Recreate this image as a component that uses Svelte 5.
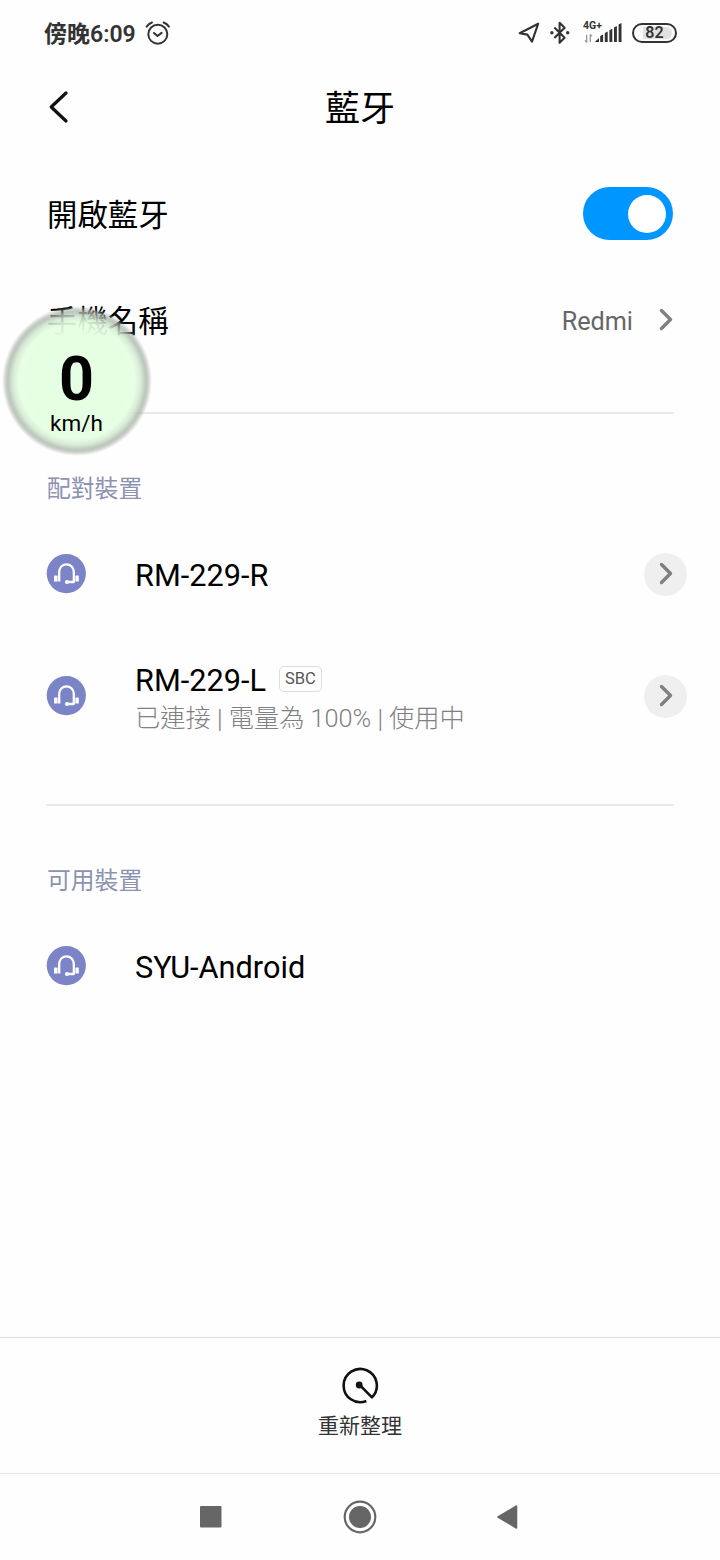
<script>
  let enabled = $state(true);
  let phoneName = $state('Redmi');
  let speed = $state(0);

  const paired = [
    { name: 'RM-229-R' },
    { name: 'RM-229-L', codec: 'SBC', status: '已連接 | 電量為 100% | 使用中' }
  ];
  const available = [{ name: 'SYU-Android' }];

  // signal bars: x offset and height
  const bars = [
    [4.7, 7.5],
    [9.3, 10.5],
    [13.9, 13.3],
    [18.5, 16],
    [23.1, 19]
  ];
</script>

{#snippet chevron()}
  <svg class="chevron" width="16" height="24" viewBox="0 0 16 24" aria-hidden="true">
    <path d="M3.5 2.5 L12.5 11.5 L3.5 20.5" />
  </svg>
{/snippet}

{#snippet headset()}
  <svg class="headset" width="40" height="40" viewBox="0 0 40 40" aria-hidden="true">
    <circle cx="20.3" cy="19.6" r="19.6" fill="#7b84c7" />
    <path d="M13.2 27.4 V17.6 a7.3 7.3 0 0 1 14.6 0 V28 H21" fill="none" stroke="#fff" stroke-width="2.3" stroke-linejoin="round" />
    <rect x="8" y="21.5" width="3.6" height="6" rx="0.6" fill="#fff" />
    <rect x="29.4" y="21.5" width="3.4" height="6" rx="0.6" fill="#fff" />
    <circle cx="20.9" cy="28" r="2" fill="#fff" />
  </svg>
{/snippet}

{#snippet device(d, more)}
  <li class="device">
    {@render headset()}
    <div class="info">
      <div class="title">
        <span class="name">{d.name}</span>
        {#if d.codec}<span class="codec">{d.codec}</span>{/if}
      </div>
      {#if d.status}<div class="status">{d.status}</div>{/if}
    </div>
    {#if more}
      <button class="more" aria-label="詳細資訊">{@render chevron()}</button>
    {/if}
  </li>
{/snippet}

<div class="screen">
  <div class="statusbar">
    <span class="time">傍晚6:09</span>
    <svg class="alarm" width="26" height="26" viewBox="0 0 26 26">
      <circle cx="12.8" cy="14.2" r="9.5" />
      <path d="M9 12.9 L12.5 16 L16.6 12.9" />
      <path d="M1.7 6.6 Q3.6 3.9 7 2.5 M18.6 2.5 Q22 3.9 23.9 6.6" />
    </svg>
    <div class="right">
      <svg class="line" width="22" height="22" viewBox="0 0 22 22">
        <path d="M20.2 1.7 L1.7 11.3 L9.4 12.6 L14 19.6 Z" />
      </svg>
      <svg class="line bt" width="20" height="24" viewBox="0 0 20 24">
        <path d="M4.4 6.6 L14.6 16.8 L9.6 21.8 V1.8 L14.6 6.8 L4.4 17" />
        <circle cx="1.9" cy="11.8" r="1.7" />
        <circle cx="17.7" cy="11.8" r="1.7" />
      </svg>
      <div class="net">
        <span>4G+</span>
        <svg width="38" height="22" viewBox="0 0 38 22">
          <path d="M2.7 20.5 V12.8 M1 18.4 L2.7 20.5 M6.3 12.3 V20 M6.3 12.3 L8 14.4" stroke="#999" stroke-width="1.3" fill="none" />
          <g transform="translate(11 0)" fill="#333">
            <path d="M-0.2 20 L4 16 V20 Z" />
            {#each bars as [x, h]}
              <path d={`M${x + 3.4} ${20 - h} V20 h-2.9 V${21.5 - h} Z`} />
            {/each}
          </g>
        </svg>
      </div>
      <div class="battery"><span>82</span></div>
    </div>
  </div>

  <header>
    <button class="back" aria-label="返回">
      <svg width="24" height="36" viewBox="0 0 24 36"><path d="M20 4 L5.2 18 L20 32" /></svg>
    </button>
    <h1>藍牙</h1>
  </header>

  <main>
    <div class="row toggle-row">
      <span class="label">開啟藍牙</span>
      <button class="switch" class:on={enabled} role="switch" aria-checked={enabled} aria-label="開啟藍牙" onclick={() => (enabled = !enabled)}>
        <i></i>
      </button>
    </div>
    <div class="row name-row">
      <span class="label">手機名稱</span>
      <span class="value">{phoneName}</span>
      {@render chevron()}
    </div>

    <section>
      <h2>配對裝置</h2>
      <ul>
        {#each paired as d}{@render device(d, true)}{/each}
      </ul>
    </section>

    <section>
      <h2>可用裝置</h2>
      <ul>
        {#each available as d}{@render device(d, false)}{/each}
      </ul>
    </section>
  </main>

  <button class="refresh">
    <svg width="42" height="40" viewBox="0 0 42 40" aria-hidden="true">
      <path d="M27.4 35 A16.6 16.6 0 1 1 32.9 31.4 L20.4 18.6" />
      <circle cx="20.2" cy="19" r="3.4" />
    </svg>
    <span>重新整理</span>
  </button>

  <nav>
    <svg width="22" height="22" viewBox="0 0 22 22"><rect width="21.5" height="21.5" rx="1" /></svg>
    <svg width="34" height="34" viewBox="0 0 34 34">
      <circle cx="17" cy="17" r="15.3" class="ring" />
      <circle cx="17" cy="17" r="11" />
    </svg>
    <svg width="22" height="26" viewBox="0 0 22 26"><path d="M1 13 L19.5 2 V24 Z" class="tri" /></svg>
  </nav>

  <!-- floating speedometer overlay -->
  <div class="speed">
    <strong>{speed}</strong>
    <span>km/h</span>
  </div>
</div>

<style>
  :global(body) { margin: 0; background: #fefefe; }
  .screen {
    position: relative;
    display: flex;
    flex-direction: column;
    width: 720px;
    height: 1560px;
    overflow: hidden;
    background: #fefefe;
    color: #000;
    font-family: Roboto, "Noto Sans CJK TC", sans-serif;
  }
  button { border: 0; padding: 0; background: none; font: inherit; color: inherit; }
  svg { display: block; flex: none; }
  h1, h2, ul { margin: 0; padding: 0; font-weight: 400; list-style: none; }

  .statusbar { display: flex; align-items: center; height: 66px; padding: 0 43px 0 44px; box-sizing: border-box; color: #333; }
  .time { width: 91px; padding-top: 3px; font-size: 23px; font-weight: 600; line-height: 62px; white-space: nowrap; }
  .alarm { margin-left: 10px; fill: none; stroke: #333; stroke-width: 2; stroke-linecap: round; }
  .right { display: flex; align-items: center; margin-left: auto; }
  .line { fill: none; stroke: #333; stroke-width: 2.1; stroke-linejoin: round; }
  .bt { margin: 0 14px 0 10px; }
  .bt circle { fill: #333; stroke: none; }
  .net { position: relative; width: 38px; margin-right: 10px; }
  .net span { position: absolute; left: -1px; top: -1px; font-size: 10.5px; font-weight: 700; line-height: 10px; }
  .battery {
    width: 45px; height: 20px; box-sizing: border-box;
    border: 2px solid #333; border-radius: 10px;
    background: linear-gradient(90deg, transparent 9px, #e2e2e2 9px) content-box;
    padding: 2px 3px 2px 0;
    text-align: center;
  }
  .battery span { display: block; margin: -2px -3px 0 0; font-size: 16px; font-weight: 600; line-height: 16px; }

  header { display: flex; align-items: center; height: 82px; padding: 0 46px; }
  .back { width: 24px; }
  .back path { fill: none; stroke: #111; stroke-width: 3.2; stroke-linecap: round; stroke-linejoin: round; }
  h1 { flex: 1; margin-right: 24px; padding-top: 5px; font-size: 35px; line-height: 77px; text-align: center; }

  main { flex: 1; }
  .row { display: flex; align-items: center; margin: 0 46px; }
  .toggle-row { height: 131px; }
  .name-row { height: 82px; padding-bottom: 51px; }
  .label { margin-right: auto; padding: 0 0 2px 1px; font-size: 30.4px; }
  .name-row .label { padding-bottom: 3px; }
  .value { margin-right: 25px; padding-top: 2px; font-size: 25.2px; color: #666; }
  .chevron path { fill: none; stroke: #808080; stroke-width: 3.4; stroke-linecap: round; stroke-linejoin: round; }
  .switch { width: 90px; height: 53px; margin-right: 1px; padding: 7px; box-sizing: border-box; border-radius: 27px; background: #ddd; }
  .switch i { display: block; width: 38px; height: 38px; border-radius: 50%; background: #fff; }
  .switch.on { background: #0096ff; }
  .switch.on i { margin-left: 38px; }

  section { margin: 0 46px; padding-bottom: 47px; border-top: 2px solid #e9e9e9; }
  h2 { height: 99px; padding: 51px 0 0 1px; box-sizing: border-box; font-size: 23.8px; line-height: 48px; color: #8c93b0; }
  .device { display: flex; align-items: center; height: 122px; margin-right: -13px; }
  .info { margin-left: 49px; padding-top: 4px; }
  .title { display: flex; align-items: center; height: 38px; }
  .name { font-size: 30.7px; line-height: 38px; }
  .codec { margin: -3px 0 0 13px; padding: 0 5px; border: 1px solid #ddd; border-radius: 5px; font-size: 16.5px; line-height: 24px; color: #555; }
  .status { margin-bottom: -3px; font-size: 25.25px; font-weight: 300; line-height: 38px; color: #808080; }
  .more { display: grid; place-items: center; width: 43px; height: 43px; margin-left: auto; border-radius: 50%; background: #efefef; }

  .refresh { display: flex; flex-direction: column; align-items: center; height: 136px; padding-top: 28px; box-sizing: border-box; border-top: 1px solid #dedede; color: #333; font-size: 21px; line-height: 40px; }
  .refresh path { fill: none; stroke: #111; stroke-width: 2.6; stroke-linejoin: round; }
  .refresh circle { fill: #111; }

  nav { display: flex; align-items: center; justify-content: space-between; height: 86px; padding: 0 201px 0 200px; border-top: 1px solid #e6e6e6; fill: #666; }
  .ring { fill: none; stroke: #666; stroke-width: 2.2; }
  .tri { stroke: #666; stroke-width: 1.5; stroke-linejoin: round; }

  .speed {
    position: absolute;
    left: 2px;
    top: 306px;
    width: 150px;
    height: 150px;
    padding-right: 1px;
    box-sizing: border-box;
    display: flex;
    flex-direction: column;
    align-items: center;
    border-radius: 50%;
    background: radial-gradient(circle, rgba(229, 255, 227, 0.98) 48px, rgba(229, 255, 227, 0.91) 58px, rgba(210, 232, 208, 0.86) 64px, rgba(165, 182, 165, 0.76) 69px, rgba(165, 172, 165, 0.6) 71px, rgba(200, 200, 200, 0) 75px);
  }
  .speed strong { margin-top: 46px; font-size: 61px; line-height: 54px; }
  .speed span { margin-top: 4px; font-size: 22.5px; line-height: 26px; }
</style>
